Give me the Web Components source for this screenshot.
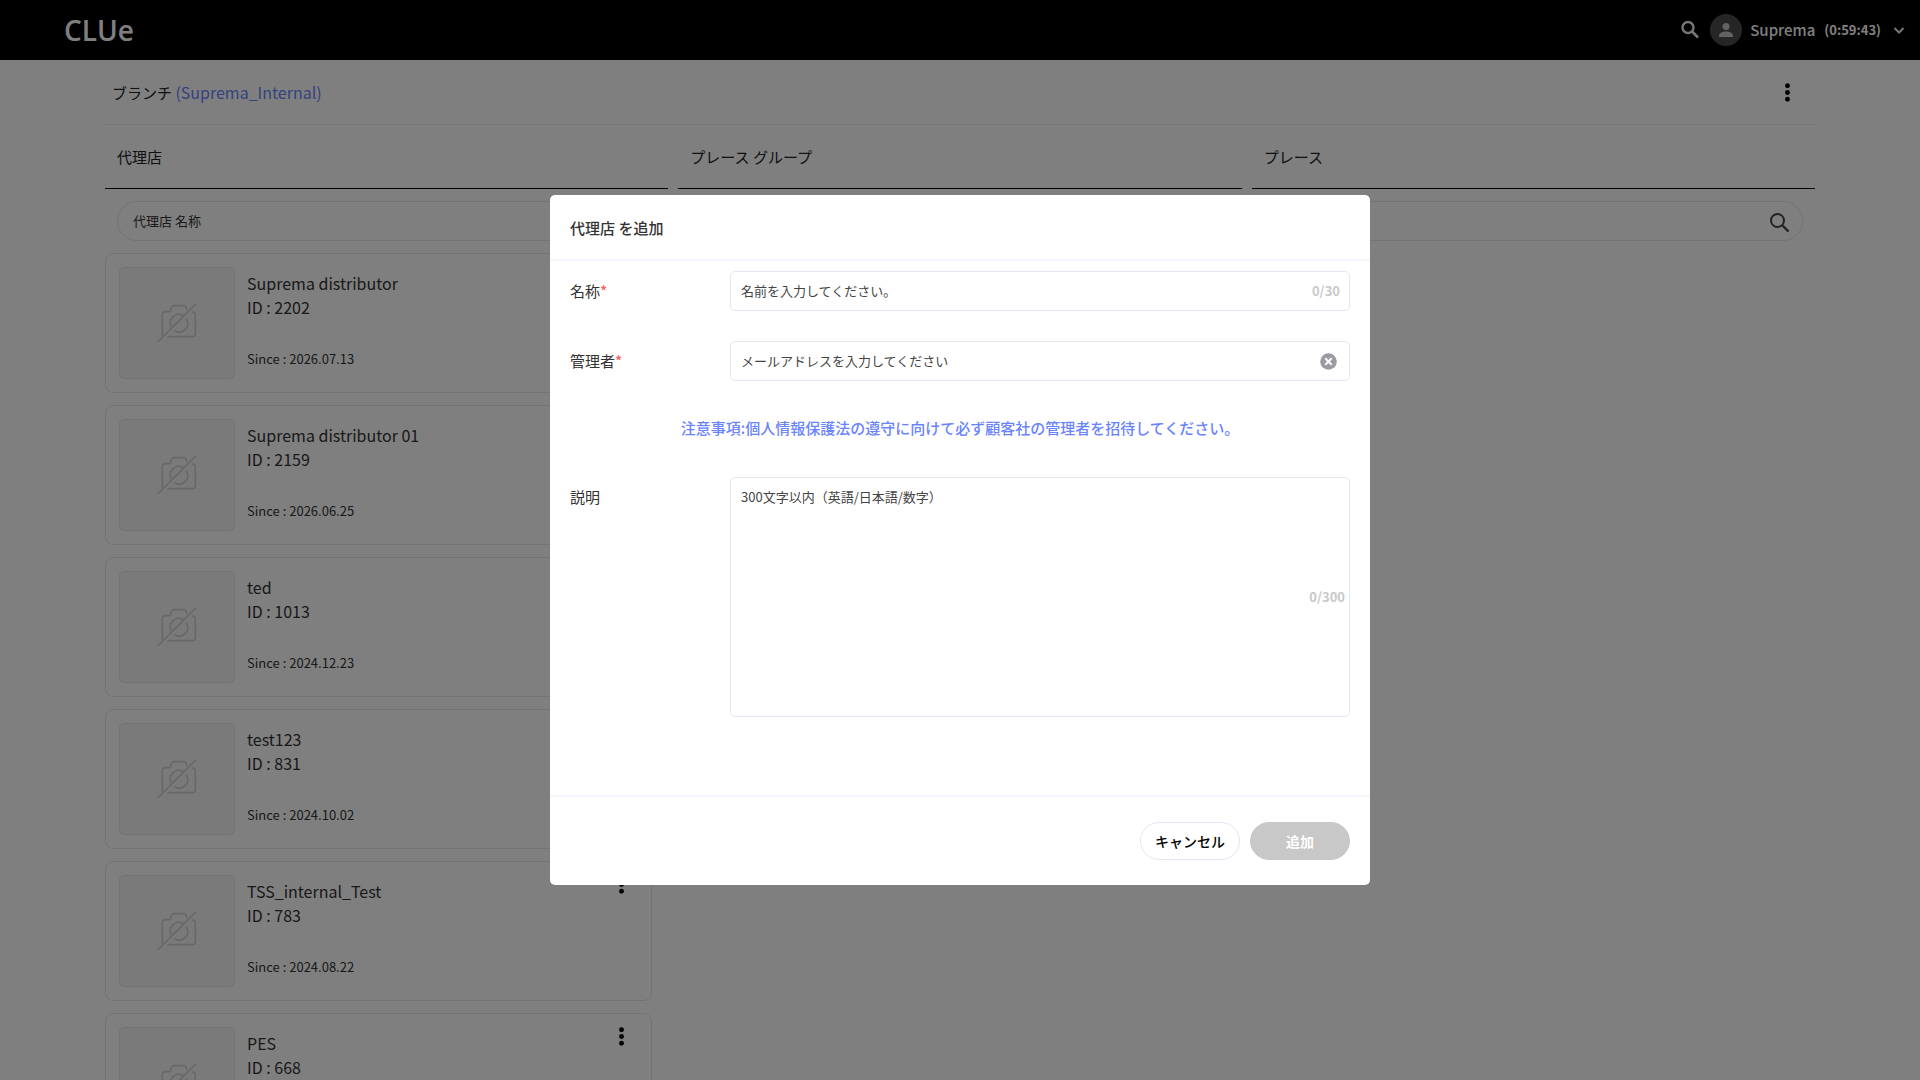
<!DOCTYPE html>
<html lang="ja">
<head>
<meta charset="utf-8">
<title>CLUe</title>
<style>
html, body { height: 100%; }
body {
  margin: 0;
  background: #fff;
  color: #333;
  font: 15px/24px "Noto Sans CJK JP", sans-serif;
  overflow: hidden;
}
</style>
</head>
<body>
<clue-app></clue-app>

<template id="t-app">
  <style>
    :host { display: block; height: 100%; overflow: hidden; }
    main { padding: 0 100px; }
    .branch {
      display: flex; align-items: center; justify-content: space-between;
      height: 64px; padding: 0 19px 0 12px; border-bottom: 1px solid #f3f3f6;
    }
    h1 { margin: 0; font-size: 15px; font-weight: 400; color: #222; }
    h1 a { font-size: 16px; color: #6a84ff; text-decoration: none; }
    .heads { display: grid; grid-template-columns: repeat(3, 1fr); gap: 10px; padding: 0 5px; }
    h2 {
      margin: 0; padding: 20px 12px 19px; font-size: 15px; font-weight: 400; color: #222;
      border-bottom: 1px solid #000;
    }
    clue-search { margin: 12px 17px; }
    .list { display: grid; gap: 12px; max-width: 547px; padding-left: 5px; }
  </style>
  <clue-header user="Suprema" time="(0:59:43)"></clue-header>
  <main>
    <div class="branch">
      <h1>ブランチ <a href="#branch">(Suprema_Internal)</a></h1>
      <clue-more></clue-more>
    </div>
    <div class="heads"><h2>代理店</h2><h2>プレース グループ</h2><h2>プレース</h2></div>
    <clue-search></clue-search>
    <div class="list">
      <clue-card code="2202" since="2026.07.13">Suprema distributor</clue-card>
      <clue-card code="2159" since="2026.06.25">Suprema distributor 01</clue-card>
      <clue-card code="1013" since="2024.12.23">ted</clue-card>
      <clue-card code="831" since="2024.10.02">test123</clue-card>
      <clue-card code="783" since="2024.08.22">TSS_internal_Test</clue-card>
      <clue-card code="668">PES</clue-card>
    </div>
  </main>
  <clue-dialog></clue-dialog>
</template>

<template id="t-header">
  <style>
    :host { display: flex; align-items: center; justify-content: space-between; height: 60px; padding: 0 12px 0 64px; background: #000; color: #fff; }
    .logo { font: 600 28px/60px "Open Sans", sans-serif; color: #fff; text-decoration: none; }
    .right { display: flex; align-items: center; }
    button { display: flex; align-items: center; padding: 0; border: 0; background: none; color: #fff; font: inherit; cursor: pointer; }
    .find { margin-right: 9px; }
    .avatar { display: flex; margin-right: 8px; }
    .name { font-size: 15px; font-weight: 500; margin-right: 9px; }
    .time { font-size: 13px; font-weight: 700; margin-right: 9px; }
  </style>
  <a class="logo" href="#home">CLUe</a>
  <div class="right">
    <button class="find" aria-label="検索"><svg width="20" height="20" viewBox="0 0 20 20" fill="none" stroke="#eee" stroke-width="2.400"><circle cx="7" cy="7.500" r="5.500"/><path d="M11 11.500l6 6" stroke-width="2.600"/></svg></button>
    <button class="user">
      <span class="avatar"><svg width="32" height="32" viewBox="0 0 32 32"><circle cx="16" cy="16" r="16" fill="#4c4c4c"/><circle cx="16" cy="12.500" r="3.500" fill="#c4c4c4"/><path d="M9 23v-1.500c0-2.500 4-4 7-4s7 1.500 7 4V23z" fill="#c4c4c4"/></svg></span>
      <span class="name"></span><span class="time"></span>
      <svg width="18" height="18" viewBox="0 0 18 18" fill="none" stroke="#eee" stroke-width="2"><path d="M4.500 7l4.500 4.500L13.500 7"/></svg>
    </button>
  </div>
</template>

<template id="t-more">
  <style>
    :host { display: block; }
    button { display: flex; padding: 0; border: 0; background: none; cursor: pointer; }
  </style>
  <button aria-label="メニュー"><svg width="27" height="27" viewBox="0 0 24 24" fill="#000"><circle cx="12" cy="6" r="2.200"/><circle cx="12" cy="12" r="2.200"/><circle cx="12" cy="18" r="2.200"/></svg></button>
</template>

<template id="t-search">
  <style>
    :host { display: flex; align-items: center; height: 38px; padding: 0 11px 0 15px; border: 1px solid #e4e7f2; border-radius: 20px; }
    input { flex: 1; min-width: 0; padding: 0; border: 0; outline: 0; background: none; font: inherit; font-size: 13px; color: #333; }
    input::placeholder { color: #333; opacity: 1; }
    button { display: flex; padding: 0; border: 0; background: none; cursor: pointer; }
  </style>
  <input type="text" aria-label="代理店 名称" placeholder="代理店 名称">
  <button aria-label="検索"><svg width="22" height="22" viewBox="0 0 22 22" fill="none" stroke="#444" stroke-width="2"><circle cx="8.500" cy="10.500" r="6.500"/><path d="M13.500 15.500l6 6" stroke-width="2.400"/></svg></button>
</template>

<template id="t-card">
  <style>
    :host { display: flex; align-items: flex-start; padding: 13px; height: 112px; border: 1px solid #e4e7f2; border-radius: 8px; color: #333; }
    .thumb { display: flex; align-items: center; justify-content: center; box-sizing: border-box; width: 116px; height: 112px; margin-right: 12px; background: #f5f5f5; border: 1px solid #e4e7f2; border-radius: 5px; }
    .info { flex: 1; display: flex; flex-direction: column; padding-top: 4px; }
    .title, .code { font-size: 16px; line-height: 24px; }
    .since { font-size: 13px; line-height: 20px; margin-top: 30px; }
    clue-more { margin: -4px 3px 0 0; }
  </style>
  <div class="thumb"><svg width="40" height="40" viewBox="0 0 120 120" fill="none" stroke="#d0d0d4" stroke-width="5" stroke-linecap="round" stroke-linejoin="round">
    <path d="M5 114L115 4"/>
    <path d="M16 97V34q0-8 8-8h12q4 0 5-4l3-10q1-4 5-4h33q4 0 5 4l2 6"/>
    <path d="M106 27q9 0 9 9v56q0 9-9 9H34"/>
    <path d="M43 73A26 26 0 0 1 79 38"/>
    <path d="M88 47A26 26 0 0 1 52 83"/>
  </svg></div>
  <div class="info"><span class="title"><slot></slot></span><span class="code"></span><span class="since"></span></div>
  <clue-more></clue-more>
</template>

<template id="t-dialog">
  <style>
    :host { position: fixed; inset: 0; display: flex; align-items: center; justify-content: center; background: rgba(0, 0, 0, .5); }
    form { width: 820px; max-width: 100%; background: #fff; border-radius: 5px; color: #333; }
    header { padding: 21px 20px 19px; border-bottom: 2px solid #f4f4fa; }
    h2 { margin: 0; font-size: 15px; line-height: 24px; font-weight: 500; }
    .body { padding: 10px 20px 78px; }
    clue-field + clue-field { margin-top: 30px; }
    .note { margin: 0; padding: 35px 0 37px; text-align: center; color: #6a84ff; font-weight: 500; }
    footer { display: flex; justify-content: flex-end; gap: 10px; padding: 25px 20px; border-top: 2px solid #f4f4fa; }
    button { width: 100px; height: 38px; padding: 0; border: 1px solid #e4e7f2; border-radius: 19px; background: #fff; color: #000; font: inherit; font-size: 14px; font-weight: 500; }
    button:disabled { border-color: #c8c8c8; background: #c8c8c8; color: #fff; font-weight: 700; }
  </style>
  <form role="dialog" aria-labelledby="dlg-title">
    <header><h2 id="dlg-title">代理店 を追加</h2></header>
    <div class="body">
      <clue-field label="名称" required placeholder="名前を入力してください。" count="0/30"></clue-field>
      <clue-field label="管理者" required placeholder="メールアドレスを入力してください" clearable></clue-field>
      <p class="note">注意事項:個人情報保護法の遵守に向けて必ず顧客社の管理者を招待してください。</p>
      <clue-field label="説明" multiline placeholder="300文字以内（英語/日本語/数字）" count="0/300"></clue-field>
    </div>
    <footer><button type="button">キャンセル</button><button type="submit" disabled>追加</button></footer>
  </form>
</template>

<template id="t-field">
  <style>
    :host { display: flex; align-items: flex-start; }
    label { width: 160px; padding: 8px 0; line-height: 24px; }
    label i { font-style: normal; font-weight: 500; color: #ff5a5a; }
    .box { flex: 1; display: flex; align-items: center; box-sizing: border-box; height: 40px; padding-right: 9px; border: 1px solid #e4e7f2; border-radius: 5px; }
    :host([multiline]) .box { height: 240px; padding-right: 4px; }
    input, textarea { flex: 1; min-width: 0; height: 100%; box-sizing: border-box; margin: 0; padding: 0 10px 2px; border: 0; outline: 0; background: none; font: inherit; font-size: 13px; color: #333; resize: none; }
    textarea { padding: 7px 10px; }
    ::placeholder { color: #444; opacity: 1; }
    .count { font-size: 13px; color: #c8c8c8; font-weight: 700; }
    button { display: flex; margin-right: 3px; padding: 0; border: 0; background: none; }
    [hidden] { display: none; }
  </style>
  <label for="f"><span></span><i hidden>*</i></label>
  <div class="box">
    <span class="count" hidden></span>
    <button type="button" aria-label="クリア" hidden><svg width="17" height="17" viewBox="0 0 17 17"><circle cx="8.500" cy="8.500" r="8.300" fill="#9b9ba2"/><path d="M5.300 5.300l6.400 6.400M11.700 5.300l-6.400 6.400" stroke="#fff" stroke-width="2"/></svg></button>
  </div>
</template>

<script>
class Base extends HTMLElement {
  constructor() {
    super();
    const t = document.getElementById(this.constructor.template);
    this.attachShadow({ mode: 'open' }).append(t.content.cloneNode(true));
  }
  $(s) { return this.shadowRoot.querySelector(s); }
}
class ClueMore extends Base { static template = 't-more'; }
class ClueSearch extends Base { static template = 't-search'; }
class ClueHeader extends Base {
  static template = 't-header';
  connectedCallback() {
    this.$('.name').textContent = this.getAttribute('user');
    this.$('.time').textContent = this.getAttribute('time');
  }
}
class ClueCard extends Base {
  static template = 't-card';
  connectedCallback() {
    this.$('.code').textContent = 'ID : ' + this.getAttribute('code');
    const since = this.getAttribute('since');
    if (since) this.$('.since').textContent = 'Since : ' + since;
  }
}
class ClueField extends Base {
  static template = 't-field';
  connectedCallback() {
    this.$('label span').textContent = this.getAttribute('label');
    this.$('label i').hidden = !this.hasAttribute('required');
    const c = document.createElement(this.hasAttribute('multiline') ? 'textarea' : 'input');
    c.id = 'f';
    c.placeholder = this.getAttribute('placeholder');
    this.$('.box').prepend(c);
    if (this.hasAttribute('count')) {
      this.$('.count').textContent = this.getAttribute('count');
      this.$('.count').hidden = false;
    }
    this.$('button').hidden = !this.hasAttribute('clearable');
  }
}
class ClueDialog extends Base { static template = 't-dialog'; }
class ClueApp extends Base { static template = 't-app'; }
customElements.define('clue-more', ClueMore);
customElements.define('clue-search', ClueSearch);
customElements.define('clue-header', ClueHeader);
customElements.define('clue-card', ClueCard);
customElements.define('clue-field', ClueField);
customElements.define('clue-dialog', ClueDialog);
customElements.define('clue-app', ClueApp);
</script>
</body>
</html>
